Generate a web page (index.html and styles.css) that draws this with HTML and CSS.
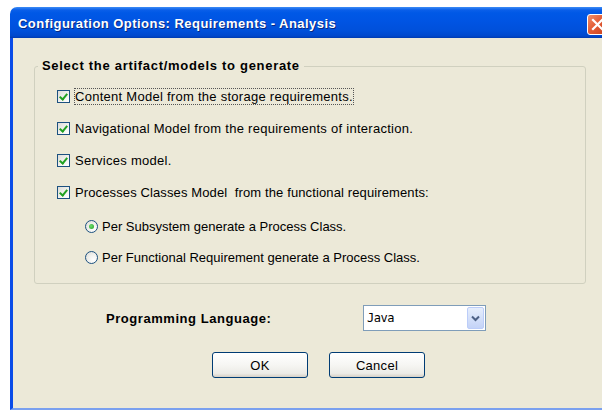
FILE: index.html
```html
<!DOCTYPE html>
<html>
<head>
<meta charset="utf-8">
<title>Configuration Options</title>
<link rel="stylesheet" href="styles.css">
</head>
<body>
<div class="window">
  <div class="titlebar">
    <span class="title">Configuration Options: Requirements - Analysis</span>
    <span class="close-btn">
      <svg width="21" height="21" viewBox="0 0 21 21">
        <path d="M6 6 L15 15 M15 6 L6 15" stroke="#fff" stroke-width="2.2" stroke-linecap="square"/>
      </svg>
    </span>
  </div>
  <div class="client">
    <fieldset class="group">
      <legend>Select the artifact/models to generate</legend>
      <div class="options">
        <label class="row check-row"><span class="check"></span><span class="text focus">Content Model from the storage requirements.</span></label>
        <label class="row check-row"><span class="check"></span><span class="text">Navigational Model from the requirements of interaction.</span></label>
        <label class="row check-row"><span class="check"></span><span class="text">Services model.</span></label>
        <label class="row check-row"><span class="check"></span><span class="text tight">Processes Classes Model&nbsp; from the functional requirements:</span></label>
        <label class="row radio-row first-radio"><span class="radio on"></span><span class="text">Per Subsystem generate a Process Class.</span></label>
        <label class="row radio-row"><span class="radio"></span><span class="text">Per Functional Requirement generate a Process Class.</span></label>
      </div>
    </fieldset>
    <div class="lang-row">
      <span class="lang-label">Programming Language:</span>
      <div class="combo">
        <span class="combo-value">Java</span>
        <span class="combo-btn">
          <svg width="9" height="7" viewBox="0 0 9 7"><path d="M1 1.5 L4.5 5 L8 1.5" fill="none" stroke="#4d6185" stroke-width="2"/></svg>
        </span>
      </div>
    </div>
    <div class="buttons">
      <button class="btn">OK</button>
      <button class="btn">Cancel</button>
    </div>
  </div>
</div>
</body>
</html>
```
FILE: styles.css
```css
html, body {
  margin: 0;
  padding: 0;
  background: #fff;
  overflow: hidden;
  width: 602px;
  height: 413px;
}

body {
  font-family: "Liberation Sans", Arial, sans-serif;
  font-size: 13px;
  color: #000;
}

.window {
  margin: 7px 0 0 10px;
  width: 620px;
}

.titlebar {
  height: 31px;
  border-radius: 7px 7px 0 0;
  background: linear-gradient(to bottom,
    #3d8cf5 0px, #0a5fe9 3px, #0058e6 6px, #0054e3 14px,
    #0050da 24px, #0048cc 29px, #003bb0 31px);
  display: flex;
  align-items: center;
  position: relative;
}

.title {
  color: #fff;
  font-weight: bold;
  font-size: 13px;
  letter-spacing: 0.46px;
  margin-left: 8px;
  margin-top: 1px;
  text-shadow: 1px 1px 0 #0a2a80;
}

.close-btn {
  position: absolute;
  left: 577px;
  top: 7px;
  width: 21px;
  height: 21px;
  box-sizing: border-box;
  border: 1px solid #fff;
  border-radius: 3px;
  background: linear-gradient(135deg, #f0906a 0%, #e35d37 45%, #c9401c 100%);
}

.close-btn svg {
  display: block;
  margin: -1px;
}

.client {
  background: #ece9d8;
  border-left: 3px solid #0a4ce8;
  border-bottom: 2px solid #7aa0ef;
  height: 372px;
  box-sizing: border-box;
  padding: 20px 0 0 21px;
  display: flex;
  flex-direction: column;
}

.group {
  margin: 0;
  width: 552px;
  height: 226px;
  box-sizing: border-box;
  border: 1px solid #d0d0bf;
  border-radius: 3px;
  padding: 0;
}

.group legend {
  padding: 0 4px;
  margin-left: 3px;
  color: #000;
  font-weight: bold;
  font-size: 13px;
  letter-spacing: 0.7px;
  line-height: 16px;
}

.options {
  display: flex;
  flex-direction: column;
  padding: 6px 0 0 22px;
}

.row {
  display: flex;
  align-items: center;
  height: 32px;
}

.radio-row {
  height: 31px;
  padding-left: 28px;
}

.first-radio {
  margin-top: 3px;
}

.radio-row .text {
  letter-spacing: 0;
}

.check {
  width: 13px;
  height: 13px;
  box-sizing: border-box;
  border: 1px solid #1c5180;
  background: linear-gradient(135deg, #dcdcd7 0%, #f4f4f1 60%, #fff 100%);
  position: relative;
  margin-right: 5px;
  flex: none;
}

.check::after {
  content: "";
  position: absolute;
  left: 3px;
  top: 1px;
  width: 3px;
  height: 6px;
  border: solid #21a121;
  border-width: 0 2px 2px 0;
  transform: rotate(40deg);
}

.radio {
  width: 13px;
  height: 13px;
  box-sizing: border-box;
  border: 1px solid #1c5180;
  border-radius: 50%;
  background: radial-gradient(circle at 70% 70%, #fff 0%, #f0f0ec 50%, #d8d8d2 100%);
  position: relative;
  margin-right: 4px;
  flex: none;
}

.radio.on::after {
  content: "";
  position: absolute;
  left: 3px;
  top: 3px;
  width: 5px;
  height: 5px;
  border-radius: 50%;
  background: radial-gradient(circle at 40% 40%, #6fdc6f, #21a121);
}

.text {
  line-height: 15px;
  letter-spacing: 0.27px;
}

.text.tight {
  letter-spacing: 0.12px;
}

.text.focus {
  outline: 1px dotted #555;
  outline-offset: 0;
}

.lang-row {
  display: flex;
  align-items: center;
  margin-top: 21px;
  height: 26px;
}

.lang-label {
  font-weight: bold;
  letter-spacing: 0.55px;
  margin-left: 72px;
  width: 257px;
}

.combo {
  width: 123px;
  height: 26px;
  box-sizing: border-box;
  border: 1px solid #7f9db9;
  background: #fff;
  display: flex;
  align-items: center;
  justify-content: space-between;
}

.combo-value {
  margin-left: 3px;
  font-family: "DejaVu Sans Mono", monospace;
  font-size: 12px;
  letter-spacing: -0.5px;
}

.combo-btn {
  width: 17px;
  height: 22px;
  margin-right: 1px;
  box-sizing: border-box;
  border: 1px solid #bccdf9;
  border-radius: 2px;
  background: linear-gradient(to bottom, #e6eefc 0%, #c4d3f7 100%);
  display: flex;
  align-items: center;
  justify-content: center;
}

.buttons {
  display: flex;
  gap: 21px;
  margin-top: 21px;
  margin-left: 178px;
}

.btn {
  width: 96px;
  height: 26px;
  box-sizing: border-box;
  border: 1px solid #003c74;
  border-radius: 3px;
  background: linear-gradient(to bottom, #ffffff 0%, #f6f6f3 50%, #ecebe6 85%, #d6d0c5 100%);
  font-family: "Liberation Sans", Arial, sans-serif;
  font-size: 13px;
  letter-spacing: 0.27px;
  color: #000;
  padding: 0;
}
```
